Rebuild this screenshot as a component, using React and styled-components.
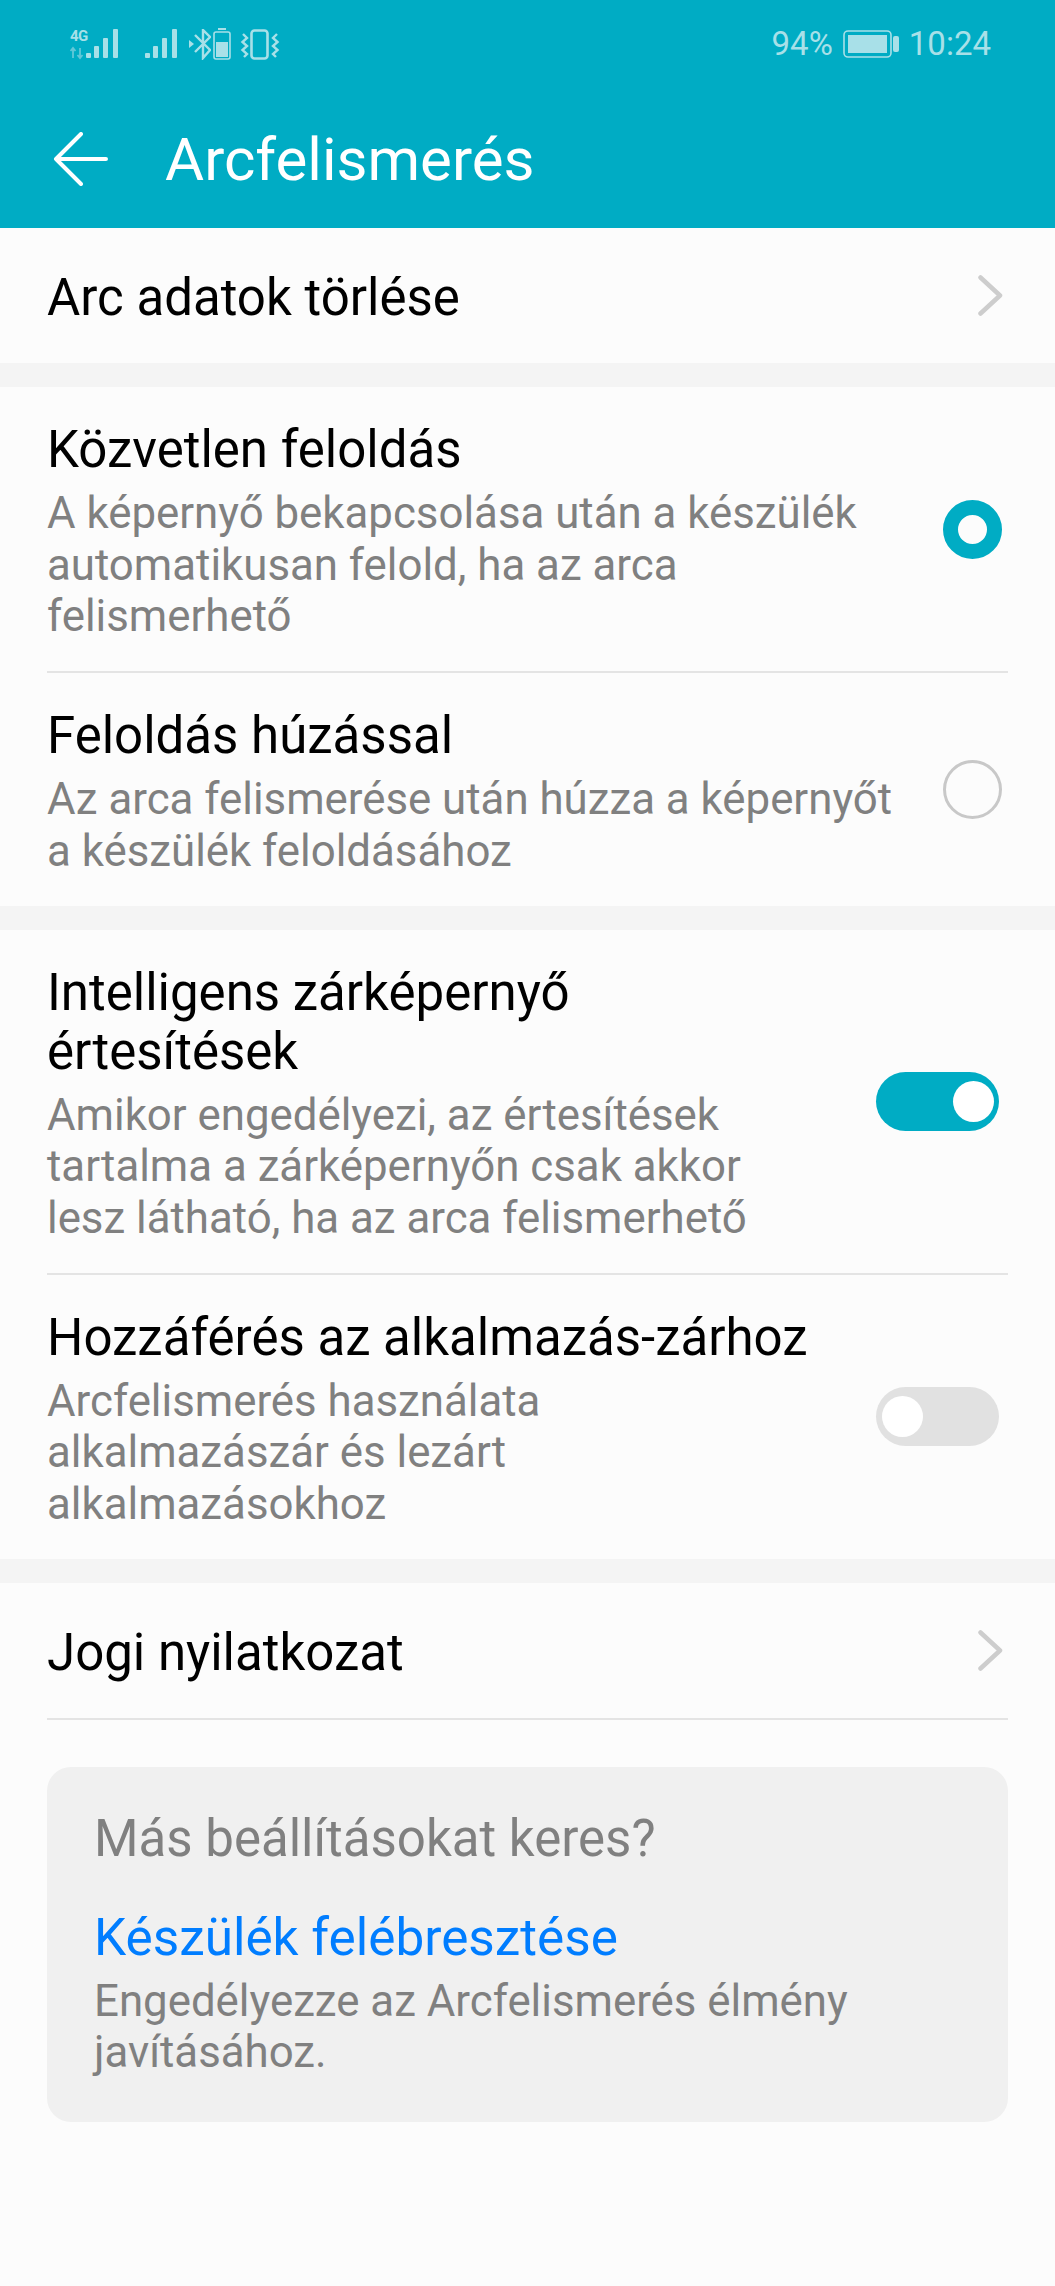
import React from 'react';
import styled, { createGlobalStyle } from 'styled-components';

const GlobalStyle = createGlobalStyle`
  html, body {
    margin: 0;
    padding: 0;
    background: #fcfcfc;
  }
  * {
    box-sizing: border-box;
  }
`;

const Screen = styled.div`
  width: 1055px;
  height: 2286px;
  overflow: hidden;
  background: #fcfcfc;
  font-family: Roboto, "Noto Sans", sans-serif;
`;

const Header = styled.header`
  height: 228px;
  background: #00acc4;
  color: #fff;
`;

const StatusBar = styled.div`
  height: 88px;
  padding: 0 64px 0 70px;
  display: flex;
  align-items: center;
  justify-content: space-between;
  color: #a8e0e8;
`;

const StatusGroup = styled.div`
  display: flex;
  align-items: center;
`;

const StatusText = styled.span`
  font-size: 33px;
  line-height: 36px;
  margin-left: ${(p) => p.$left || 0}px;
`;

const NetworkLabel = styled.span`
  position: absolute;
  left: 0;
  top: 0;
  width: 17px;
  font-size: 15px;
  font-weight: 700;
  line-height: 14px;
  letter-spacing: -0.6px;
  color: #a8e0e8;
`;

const NetworkIcon = styled.div`
  position: relative;
  width: 48px;
  height: 31px;
  flex: none;
`;

const TitleRow = styled.div`
  display: flex;
  align-items: center;
  height: 140px;
  padding: 4px 0 0 53px;
`;

const Title = styled.h1`
  margin: 0 0 0 56px;
  font-size: 60px;
  font-weight: 400;
  line-height: 68px;
`;

const Section = styled.section`
  background: #fcfcfc;
`;

const Gap = styled.div`
  height: 24px;
  background: #f4f4f4;
`;

const Row = styled.div`
  display: flex;
  align-items: center;
  justify-content: space-between;
  min-height: ${(p) => p.$height || 0}px;
  margin: 0 47px;
  border-bottom: ${(p) => (p.$divider ? '2px solid #e4e4e4' : 'none')};
`;

const RowText = styled.div`
  padding: 33px 0 28px;
`;

const RowTitle = styled.div`
  padding-top: ${(p) => (p.$single ? '4px' : '0')};
  font-size: 51px;
  line-height: 59px;
  color: #000;
`;

const RowDesc = styled.div`
  margin-top: 9px;
  font-size: 43.8px;
  line-height: 51.7px;
  color: #808080;
`;

const Chevron = styled.svg`
  width: 25px;
  height: 41px;
  margin-right: 5px;
  flex: none;
  fill: none;
  stroke: #cdcdcd;
  stroke-width: 4.5;
  stroke-linecap: round;
  stroke-linejoin: round;
`;

const Radio = styled.div`
  width: 59px;
  height: 59px;
  margin-right: 6px;
  border-radius: 50%;
  flex: none;
  background: #fcfcfc;
  border: ${(p) => (p.$on ? '15px solid #00acc4' : '3px solid #c8c8c8')};
`;

const Toggle = styled.div`
  width: 123px;
  height: 59px;
  margin-right: 9px;
  padding: 0 5px 0 6px;
  border-radius: 30px;
  flex: none;
  display: flex;
  align-items: center;
  justify-content: ${(p) => (p.$on ? 'flex-end' : 'flex-start')};
  background: ${(p) => (p.$on ? '#00acc4' : '#e1e1e1')};
`;

const Knob = styled.div`
  width: 41px;
  height: 41px;
  border-radius: 50%;
  background: #fff;
`;

const Card = styled.div`
  margin: 47px 47px 0;
  height: 355px;
  padding: 43px 47px 0;
  border-radius: 24px;
  background: #f0f0f0;
`;

const CardHeading = styled.div`
  font-size: 51px;
  line-height: 58px;
  color: #808080;
`;

const CardLink = styled.div`
  margin-top: 41px;
  font-size: 51.3px;
  line-height: 58px;
  color: #007dff;
`;

const CardText = styled.div`
  margin-top: 9px;
  font-size: 43.8px;
  line-height: 51.7px;
  color: #808080;
`;

const Icon = styled.svg`
  display: block;
  flex: none;
  margin: 0 0 ${(p) => p.$bottom || 0}px ${(p) => p.$left || 0}px;
`;

const Signal = ({ x = 0 }) => (
  <g fill="#a8e0e8">
    <rect x={x} y="24" width="5" height="5" rx="1" />
    <rect x={x + 8} y="17" width="5" height="12" rx="1" />
    <rect x={x + 17} y="9" width="5" height="20" rx="1" />
    <rect x={x + 27} y="0" width="5" height="29" rx="1" />
  </g>
);

// 4G with up/down arrows and signal, second signal, bluetooth, small battery, vibrate
const StatusIconsLeft = () => (
  <>
    <NetworkIcon>
      <NetworkLabel>4G</NetworkLabel>
      <Icon width="48" height="31" viewBox="0 0 48 31">
        <path d="M3 29 V19 M0.5 22 L3 19 L5.5 22 M10 19 V29 M7.5 26 L10 29 L12.5 26" fill="none" stroke="#62c8d8" strokeWidth="1.8" />
        <Signal x={16} />
      </Icon>
    </NetworkIcon>
    <Icon $left={27} width="32" height="31" viewBox="0 0 32 31">
      <Signal x={0} />
    </Icon>
    <Icon $left={12} width="22" height="31" viewBox="0 0 22 31">
      <path d="M6 6 L21 21 L14 29 V1 L21 8 L6 23" fill="none" stroke="#a8e0e8" strokeWidth="2.4" />
      <path d="M0 11 L5 15 L0 19 Z" fill="#a8e0e8" />
    </Icon>
    <Icon $left={2} width="18" height="32" viewBox="0 0 18 32">
      <rect x="5" y="0" width="8" height="2" fill="#a8e0e8" />
      <rect x="1" y="4" width="16" height="27" rx="2" fill="none" stroke="#a8e0e8" strokeWidth="1.6" />
      <rect x="3" y="14" width="12" height="15" fill="#a8e0e8" />
    </Icon>
    <Icon $left={9} width="40" height="31" viewBox="0 0 40 31" fill="none" stroke="#a8e0e8">
      <rect x="11.5" y="1.5" width="16" height="28" rx="3" strokeWidth="2.6" />
      <path d="M3 5 L7 9 L2.5 13 L7 17 L2.5 21 L7 25 L4 28 M37 5 L33 9 L37.5 13 L33 17 L37.5 21 L33 25 L36 28" strokeWidth="2.4" />
    </Icon>
  </>
);

const Battery = () => (
  <Icon $left={10} width="56" height="28" viewBox="0 0 56 28">
    <rect x="1" y="1" width="47" height="26" rx="4" fill="none" stroke="#a8e0e8" strokeWidth="1.6" />
    <rect x="5" y="5" width="39" height="18" fill="#a8e0e8" />
    <rect x="50" y="6" width="6" height="16" rx="2" fill="#a8e0e8" />
  </Icon>
);

const BackArrow = () => (
  <Icon $bottom={3} width="56" height="54" viewBox="0 0 56 54" fill="none" stroke="#fff" strokeWidth="4" strokeLinecap="round" strokeLinejoin="round">
    <path d="M53 27 H3 M28 2 L3 27 L28 52" />
  </Icon>
);

const ChevronIcon = () => (
  <Chevron viewBox="0 0 25 41">
    <path d="M2.5 2.5 L22 20.5 L2.5 38.5" />
  </Chevron>
);

const App = () => (
  <>
    <GlobalStyle />
    <Screen>
      <Header>
        <StatusBar>
          <StatusGroup>
            <StatusIconsLeft />
          </StatusGroup>
          <StatusGroup>
            <StatusText>94%</StatusText>
            <Battery />
            <StatusText $left={10}>10:24</StatusText>
          </StatusGroup>
        </StatusBar>
        <TitleRow>
          <BackArrow />
          <Title>Arcfelismerés</Title>
        </TitleRow>
      </Header>

      <Section>
        <Row $height={135}>
          <RowTitle $single>Arc adatok törlése</RowTitle>
          <ChevronIcon />
        </Row>
      </Section>
      <Gap />

      <Section>
        <Row $divider>
          <RowText>
            <RowTitle>Közvetlen feloldás</RowTitle>
            <RowDesc>
              A képernyő bekapcsolása után a készülék<br />
              automatikusan felold, ha az arca<br />
              felismerhető
            </RowDesc>
          </RowText>
          <Radio $on />
        </Row>
        <Row>
          <RowText>
            <RowTitle>Feloldás húzással</RowTitle>
            <RowDesc>
              Az arca felismerése után húzza a képernyőt<br />
              a készülék feloldásához
            </RowDesc>
          </RowText>
          <Radio />
        </Row>
      </Section>
      <Gap />

      <Section>
        <Row $divider>
          <RowText>
            <RowTitle>
              Intelligens zárképernyő<br />
              értesítések
            </RowTitle>
            <RowDesc>
              Amikor engedélyezi, az értesítések<br />
              tartalma a zárképernyőn csak akkor<br />
              lesz látható, ha az arca felismerhető
            </RowDesc>
          </RowText>
          <Toggle $on>
            <Knob />
          </Toggle>
        </Row>
        <Row>
          <RowText>
            <RowTitle>Hozzáférés az alkalmazás-zárhoz</RowTitle>
            <RowDesc>
              Arcfelismerés használata<br />
              alkalmazászár és lezárt<br />
              alkalmazásokhoz
            </RowDesc>
          </RowText>
          <Toggle>
            <Knob />
          </Toggle>
        </Row>
      </Section>
      <Gap />

      <Section>
        <Row $height={137} $divider>
          <RowTitle $single>Jogi nyilatkozat</RowTitle>
          <ChevronIcon />
        </Row>
      </Section>

      <Card>
        <CardHeading>Más beállításokat keres?</CardHeading>
        <CardLink>Készülék felébresztése</CardLink>
        <CardText>
          Engedélyezze az Arcfelismerés élmény<br />
          javításához.
        </CardText>
      </Card>
    </Screen>
  </>
);

export default App;
